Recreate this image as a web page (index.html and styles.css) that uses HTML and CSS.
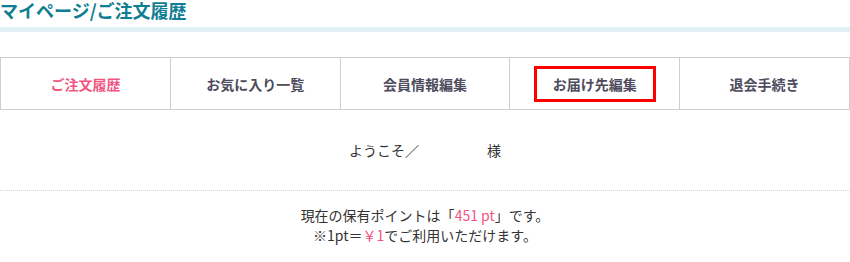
FILE: index.html
```html
<!DOCTYPE html>
<html lang="ja">
<head>
<meta charset="utf-8">
<title>マイページ/ご注文履歴</title>
<link rel="stylesheet" href="styles.css">
</head>
<body>
<h1 class="page-title">マイページ/ご注文履歴</h1>
<nav class="tabs">
  <a class="tab tab-active">ご注文履歴</a>
  <a class="tab">お気に入り一覧</a>
  <a class="tab">会員情報編集</a>
  <a class="tab"><span class="highlight">お届け先編集</span></a>
  <a class="tab">退会手続き</a>
</nav>
<div class="welcome">ようこそ／<span class="name"></span>様</div>
<div class="points">
  <p>現在の保有ポイントは「<span class="pink">451 pt</span>」です。</p>
  <p>※1pt＝<span class="pink">￥1</span>でご利用いただけます。</p>
</div>
</body>
</html>
```
FILE: styles.css
```css
html, body {
  margin: 0;
  padding: 0;
  background: #fff;
}
body {
  font-family: "Noto Sans CJK JP", "Noto Sans", sans-serif;
  color: #333;
  width: 850px;
}
.page-title {
  margin: 0;
  font-size: 18px;
  line-height: 20px;
  font-weight: bold;
  color: #0f7d92;
  padding-bottom: 7px;
  border-bottom: 5px solid #e2eff3;
}
.tabs {
  display: flex;
  margin-top: 25px;
  border: 1px solid #cfcfcf;
}
.tab {
  flex: 1;
  height: 51px;
  display: flex;
  align-items: center;
  justify-content: center;
  font-size: 14px;
  line-height: 20px;
  font-weight: bold;
  color: #4d4b5c;
  text-decoration: none;
}
.tab + .tab {
  border-left: 1px solid #cfcfcf;
}
.tab-active {
  color: #f2557f;
}
.highlight {
  display: inline-block;
  border: 3px solid #ff0000;
  padding: 5px 16px;
}
.welcome {
  text-align: center;
  font-size: 14px;
  line-height: 20px;
  padding: 30px 0;
  border-bottom: 1px dotted #d8d8d8;
}
.name {
  display: inline-block;
  width: 68px;
}
.points {
  text-align: center;
  font-size: 14px;
  line-height: 20px;
  padding-top: 14px;
}
.points p {
  margin: 0;
}
.pink {
  color: #f2557f;
}
```
